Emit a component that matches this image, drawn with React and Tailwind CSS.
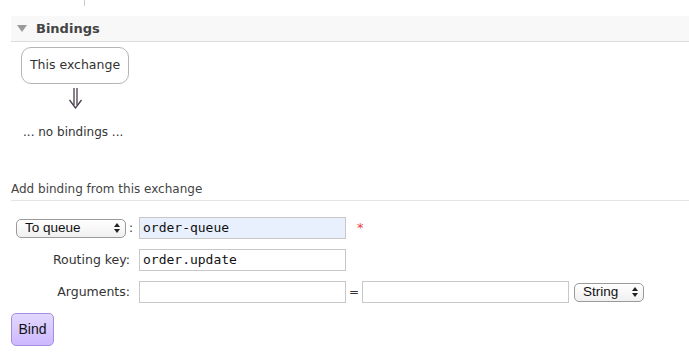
import React from 'react';

const sans = { fontFamily: '"DejaVu Sans", Verdana, sans-serif' };

function Select({ label, width }) {
  return (
    <div
      className={`flex items-center justify-between h-[19px] ${width} border border-[#9a9a9a] rounded-[5px] bg-gradient-to-b from-white to-[#f0f0f0] pl-[8px] pr-[5px] text-[13.5px] text-[#111]`}
      style={{ fontFamily: '"Liberation Sans", Arial, sans-serif' }}
    >
      <span>{label}</span>
      <svg width="6" height="10" viewBox="0 0 6 10">
        <path d="M0 4 L3 0 L6 4 Z" fill="#222" />
        <path d="M0 6 L3 10 L6 6 Z" fill="#222" />
      </svg>
    </div>
  );
}

function TextInput({ value, highlight }) {
  return (
    <div
      className={`w-[207px] h-[22px] border border-[#c8c8c8] px-[3px] flex items-center text-[13px] text-[#111] ${highlight ? 'bg-[#e8f0fe]' : 'bg-white'}`}
      style={{ fontFamily: '"DejaVu Sans Mono", Menlo, monospace' }}
    >
      {value}
    </div>
  );
}

export default function App() {
  return (
    <div className="w-[689px] h-[355px] bg-white overflow-hidden text-[12px] text-[#333]" style={sans}>
      <div className="ml-[84px] w-px h-[6px] bg-[#ccc]" />

      {/* Bindings header */}
      <div className="mt-[10px] ml-[11px] h-[26px] bg-[#f8f8f8] border-b border-[#dcdcdc] flex items-center">
        <svg className="ml-[6px]" width="10" height="7" viewBox="0 0 10 7">
          <path d="M0 0 L10 0 L5 7 Z" fill="#9b9b9b" />
        </svg>
        <span className="ml-[9px] text-[13px] font-bold text-[#444]">Bindings</span>
      </div>

      <div className="mt-[5px] ml-[21px] w-[108px] h-[37px] border border-[#b5b5b5] rounded-[10px] flex items-center justify-center text-[12.5px] text-[#333]">
        This exchange
      </div>

      <svg className="ml-[66px] mt-[4px] block" width="20" height="21" viewBox="0 0 20 21">
        <path d="M8 0 V17 M11 0 V17" stroke="#4a3f4d" strokeWidth="1.3" fill="none" />
        <path d="M3.5 12 L9.5 20 L15.5 12" stroke="#4a3f4d" strokeWidth="1.3" fill="none" />
      </svg>

      <div className="mt-[15px] ml-[23px] leading-[16px]">... no bindings ...</div>

      {/* Add binding form */}
      <div className="mt-[41px] ml-[11px] pb-[3px] border-b border-[#e4e4e4] leading-[16px] text-[#444]">
        Add binding from this exchange
      </div>

      <div className="mt-[16px] flex flex-col gap-[10px]">
        <div className="flex items-center">
          <div className="ml-[16px]">
            <Select label="To queue" width="w-[110px]" />
          </div>
          <span className="ml-[3px] w-[10px]">:</span>
          <TextInput value="order-queue" highlight />
          <span className="ml-[11px] text-[#e84040] text-[13px]">*</span>
        </div>
        <div className="flex items-center">
          <span className="w-[131px] pr-[1px] text-right text-[12.5px]">Routing key:</span>
          <span className="w-[8px]" />
          <TextInput value="order.update" />
        </div>
        <div className="flex items-center">
          <span className="w-[131px] pr-[1px] text-right text-[12.5px]">Arguments:</span>
          <span className="w-[8px]" />
          <TextInput value="" />
          <span className="w-[16px] text-center">=</span>
          <TextInput value="" />
          <div className="ml-[5px]">
            <Select label="String" width="w-[70px]" />
          </div>
        </div>
      </div>

      <button
        className="block mt-[10px] ml-[11px] w-[43px] h-[33px] rounded-[5px] border border-[#a58ee0] bg-gradient-to-b from-[#e2d8ff] to-[#cdb8ff] text-[14px] text-[#111]"
        style={{ fontFamily: '"Liberation Sans", Arial, sans-serif' }}
      >
        Bind
      </button>
    </div>
  );
}
